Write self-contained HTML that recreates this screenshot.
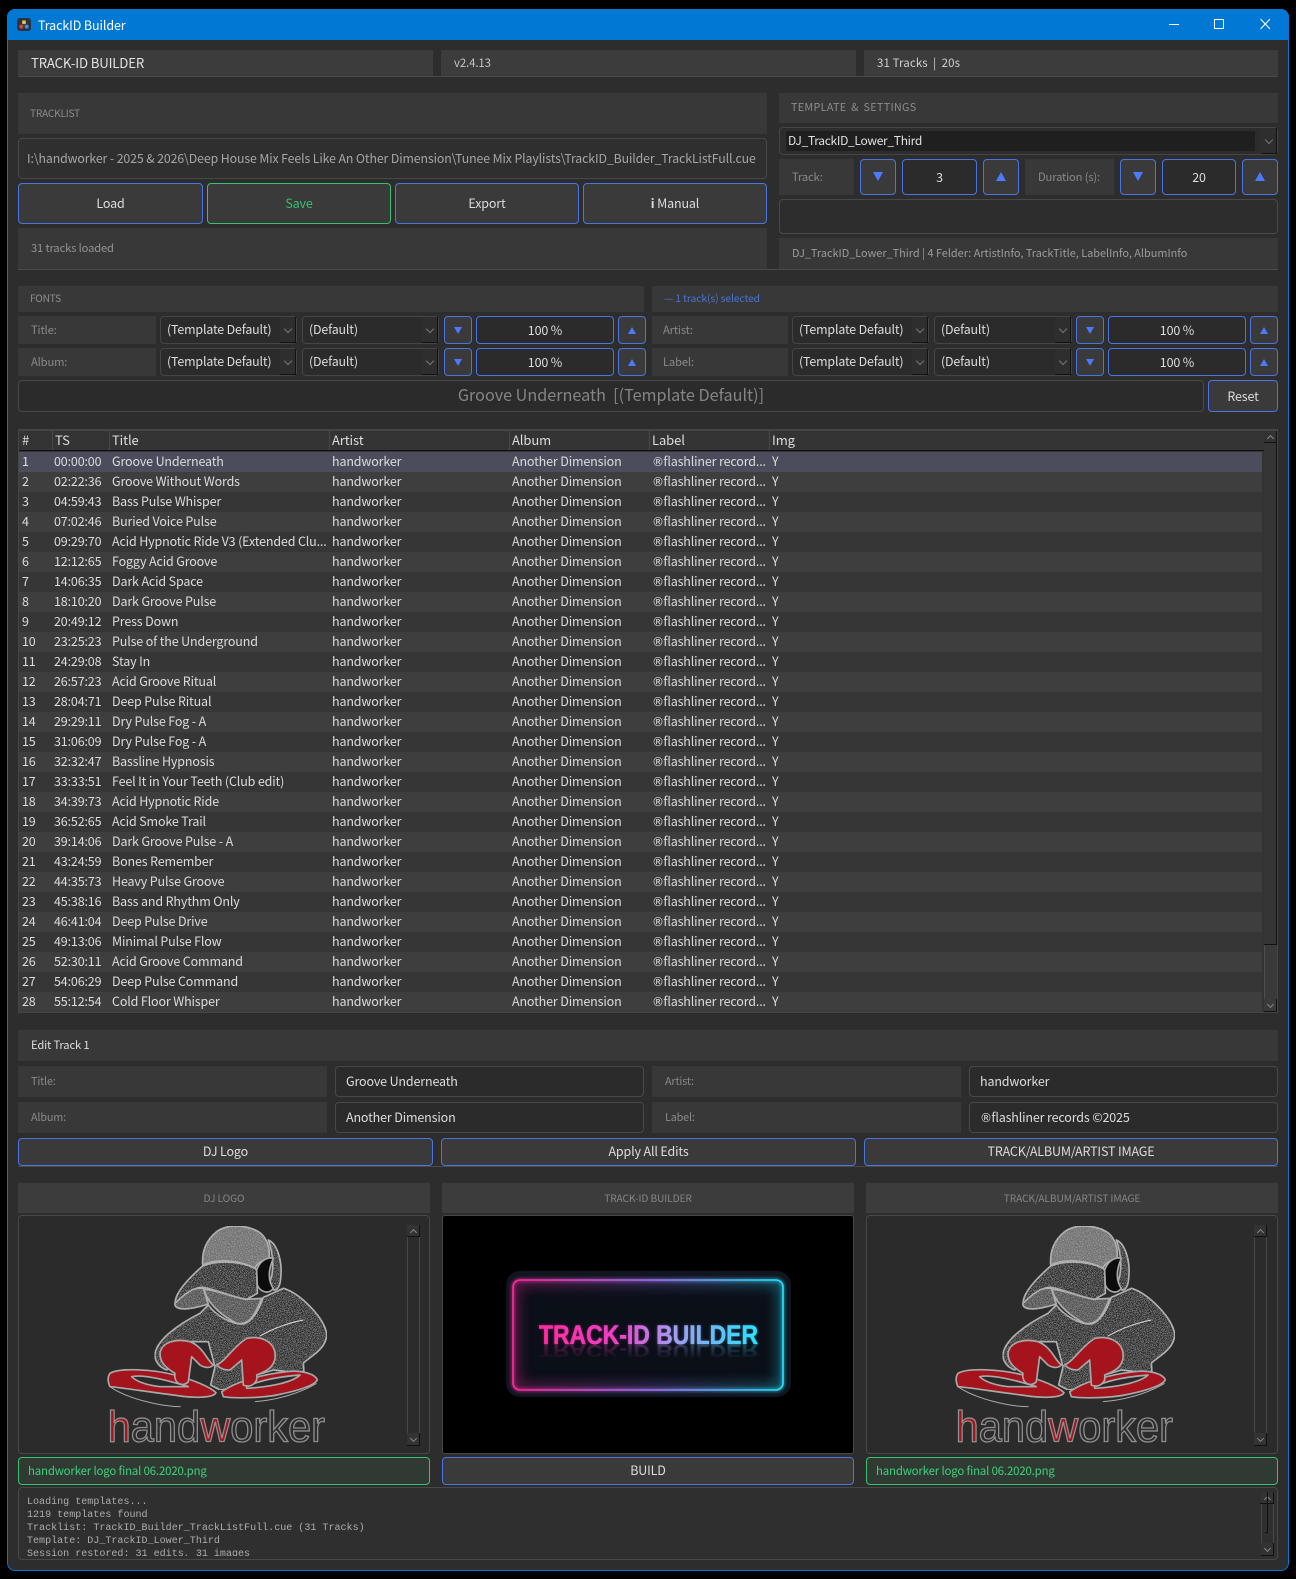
<!DOCTYPE html>
<html><head><meta charset="utf-8"><title>TrackID Builder</title>
<style>
html,body{margin:0;padding:0;background:#000;width:1296px;height:1579px;overflow:hidden}
body{position:relative;font-family:"Noto Sans CJK JP","Liberation Sans",sans-serif;font-size:12.5px;letter-spacing:-.15px;color:#ddd}
div,span{box-sizing:border-box}
s{text-decoration:none;font-family:"DejaVu Sans",sans-serif;font-size:12px;letter-spacing:-.6px}
.a{position:absolute}
.s{position:absolute;background:#383838}
.h{position:absolute;background:#3c3c3c}
.t{position:absolute;white-space:pre;line-height:16px;transform:translateY(-8px)}
.lb{color:#8a8a8a;font-size:11.2px;letter-spacing:-.15px}
.cap{color:#8c8c8c;font-size:10.2px;letter-spacing:-.25px}
.btn{position:absolute;background:#3a3a3a;border:1px solid #4a74e0;border-radius:4px;display:flex;align-items:center;justify-content:center;color:#ddd;font-size:12.5px;padding-bottom:2px}
.btn.n{padding-bottom:3px}
.val{position:absolute;background:#2b2b2b;border:1px solid #4a74e0;border-radius:4px;display:flex;align-items:center;justify-content:center;color:#ddd;font-size:12.5px;padding-bottom:2px}
.up,.dn{width:0;height:0;border-left:5px solid transparent;border-right:5px solid transparent}
.up{border-bottom:9px solid #4a7cff}.dn{border-top:9px solid #4a7cff}
.sm .up,.sm .dn{border-left-width:4px;border-right-width:4px}
.sm .up{border-bottom-width:7px}.sm .dn{border-top-width:7px}
.combo{position:absolute;background:#2b2b2b;border:1px solid #454545;border-radius:4px;color:#ddd;font-size:12.4px;line-height:24px;padding-left:6px;white-space:pre}
.combo:after{content:"";position:absolute;right:0;top:0;bottom:0;width:15px;background:#2e2e2e;border-right:1px solid #111;border-bottom:1px solid #111}
.combo:before{content:"";position:absolute;z-index:1;right:5px;top:9px;width:5px;height:5px;border-right:1px solid #777;border-bottom:1px solid #777;transform:rotate(45deg)}
.inp{position:absolute;background:#2b2b2b;border:1px solid #484848;border-radius:4px}
.r{position:absolute;left:19px;width:1243px;height:20px;background:#363636;font-size:12.5px;color:#dcdcdc}
.r:nth-child(even){background:#3e3e3e}
.r i{font-style:normal;position:absolute;top:-1px;line-height:19px;white-space:pre}
.r i:nth-child(1){left:3px}.r i:nth-child(2){left:35px}.r i:nth-child(3){left:93px}.r i:nth-child(4){left:313px}.r i:nth-child(5){left:493px}.r i:nth-child(6){left:633px}.r i:nth-child(7){left:753px}
.hc{position:absolute;top:431px;height:19px;border-left:1px solid #484848;line-height:18px;padding-left:2px;font-size:13px;letter-spacing:-.1px;color:#ddd}
.sb{position:absolute;background:#333;border-right:1px solid #111;border-bottom:1px solid #111}
.sb:after{content:"";position:absolute;left:4px;width:4px;height:4px;border-left:1px solid #888;border-top:1px solid #888}
.sb.u:after{top:5px;transform:rotate(45deg)}
.sb.d:after{top:3px;transform:rotate(225deg)}
.track{position:absolute;border-left:1px solid #484848;border-right:1px solid #484848}
.log{font-family:"Liberation Mono",monospace;font-size:10.05px;letter-spacing:0;color:#adadad}
.ih{text-align:center;line-height:29px;font-size:10.2px;letter-spacing:-.1px;color:#858585}
.fl{background:#2f3b32;border:1px solid #36c070;border-radius:4px;color:#3fd07f;font-size:11.4px;letter-spacing:-.15px;line-height:27px;padding-left:9px}
</style></head><body>
<svg width="0" height="0" style="position:absolute"><defs>
<filter id="gr" x="0" y="0" width="100%" height="100%"><feTurbulence type="fractalNoise" baseFrequency=".45" numOctaves="2" seed="3" result="n"/><feColorMatrix in="n" type="matrix" values="0 0 0 0 1 0 0 0 0 1 0 0 0 0 1 0 0 0 1 -.46" result="w"/><feComposite in="w" in2="SourceAlpha" operator="in" result="g"/><feMerge><feMergeNode in="SourceGraphic"/><feMergeNode in="g"/></feMerge></filter>
<symbol id="lg" viewBox="0 0 1140 750">
<g stroke="#a8a8a8" stroke-width="5" stroke-linejoin="round">
<g filter="url(#gr)">
<path fill="#2a2a2a" d="M285,432C290,392 350,345 420,310L445,285C470,320 520,345 550,342C580,335 600,290 610,262L670,235C720,250 790,320 800,370C802,420 740,445 730,460L732,490L640,480L590,495L560,530L480,540L452,525L465,470L445,395L390,395L320,480C295,470 283,450 285,432Z"/>
<path fill="#505050" d="M432,238C440,270 470,310 530,340C560,345 580,330 605,265L560,268C520,262 470,240 432,238Z"/>
<path fill="#505050" d="M345,285C350,302 390,300 445,282L430,235C395,232 345,250 345,285Z"/>
<path fill="#2c2c2c" d="M345,280C345,250 380,210 428,168C480,148 550,155 590,178L592,250L560,268C520,262 470,240 430,232C400,230 370,255 345,280Z"/>
<path fill="#6e6e6e" d="M428,165C425,120 440,90 470,65C500,42 560,42 600,68C620,85 630,110 628,145C610,150 590,160 585,175C540,150 470,145 428,165Z"/>
<path fill="#2e2e2e" d="M625,90C650,100 668,150 662,205C660,235 645,255 625,225C645,190 640,130 625,90Z"/>
</g>
<path fill="#0c0c0c" d="M590,180C600,150 625,140 640,145C625,180 622,210 640,235C625,255 600,245 592,225Z"/>
<path fill="none" stroke="#ddd" stroke-width="3" d="M600,378C640,355 680,340 730,330"/>
<path fill="#a5141c" d="M150,490C180,472 280,478 345,495C400,510 450,530 468,548C460,565 400,565 340,555C260,545 180,532 150,530C143,515 143,500 150,490Z"/>
<path fill="#2a2a2a" d="M215,500C250,492 320,510 385,530L300,530C260,525 230,515 215,500Z"/>
<path fill="#a5141c" d="M485,545C520,520 590,495 680,485C720,480 765,490 772,510C760,530 700,545 650,555C600,565 520,565 490,560Z"/>
<path fill="#2a2a2a" d="M560,530C600,510 660,500 720,495C700,515 640,530 560,535Z"/>
<path fill="#a5141c" d="M300,430C305,395 350,385 390,395C430,410 440,450 460,465C450,477 430,472 420,465L395,440L385,515C370,532 340,522 345,490C320,475 300,460 300,430Z"/>
<path fill="#a5141c" d="M470,465C500,450 520,410 560,385C610,375 650,400 645,445C640,480 600,490 590,495C595,520 570,535 550,525L545,450L510,480C490,480 480,475 470,465Z"/>
<path fill="none" stroke-width="3" d="M150,530C200,565 300,590 362,590"/>
<path fill="none" stroke-width="3" d="M585,575C650,570 720,550 770,520"/>
</g></symbol>
</defs></svg>

<!-- window -->
<div class="a" style="left:7px;top:9px;width:1282px;height:1562px;background:#2d2d2d;border:1px solid #0078d4;border-radius:8px"></div>
<div class="a" style="left:7px;top:9px;width:1282px;height:31px;background:#0078d4;border-radius:8px 8px 0 0"></div>
<svg class="a" style="left:17px;top:18px" width="14" height="13"><rect width="14" height="13" rx="3" fill="#2a3340"/><circle cx="7" cy="4.2" r="2" fill="#e8c24a"/><circle cx="4.3" cy="8.6" r="2" fill="#d8453c"/><circle cx="9.7" cy="8.6" r="2" fill="#3f8fe0"/></svg>
<div class="t" style="left:38px;top:25px;color:#fff;font-size:12.5px;letter-spacing:-.1px">TrackID Builder</div>
<svg class="a" style="left:1160px;top:14px" width="120" height="20" fill="none" stroke="#fff" stroke-width="1"><path d="M9,10.5H19"/><rect x="54.5" y="5.5" width="9" height="9"/><path d="M100.5,5L110,15M110,5L100.5,15"/></svg>

<!-- top header -->
<div class="h" style="left:18px;top:50px;width:415px;height:26px"></div>
<div class="h" style="left:441px;top:50px;width:415px;height:26px"></div>
<div class="h" style="left:864px;top:50px;width:414px;height:26px"></div>
<div class="a" style="left:18px;top:76px;width:1260px;height:1px;background:#4a4a4a"></div>
<div class="t" style="left:31px;top:63px;font-size:13.2px;color:#e2e2e2">TRACK-ID BUILDER</div>
<div class="t" style="left:454px;top:63px;font-size:11.4px;letter-spacing:-.1px;color:#c4c4c4">v2.4.13</div>
<div class="t" style="left:877px;top:63px;font-size:11.5px;letter-spacing:.1px;color:#d0d0d0">31 Tracks  |  20s</div>

<!-- tracklist -->
<div class="s" style="left:18px;top:93px;width:749px;height:41px"></div>
<div class="t cap" style="left:30px;top:113px">TRACKLIST</div>
<div class="inp" style="left:18px;top:138px;width:749px;height:41px;background:#2f2f2f"></div>
<div class="t" style="left:27px;top:158px;font-size:12.3px;color:#a6a6a6;width:732px;overflow:hidden;letter-spacing:-.1px">I:\handworker - 2025 &amp; 2026\Deep House Mix Feels Like An Other Dimension\Tunee Mix Playlists\TrackID_Builder_TrackListFull.cue</div>
<div class="btn" style="left:18px;top:183px;width:185px;height:41px">Load</div>
<div class="btn" style="left:207px;top:183px;width:184px;height:41px;border-color:#36c070;color:#36c070">Save</div>
<div class="btn" style="left:395px;top:183px;width:184px;height:41px">Export</div>
<div class="btn" style="left:583px;top:183px;width:184px;height:41px"><b>i</b>&nbsp;Manual</div>
<div class="s" style="left:18px;top:228px;width:749px;height:41px"></div>
<div class="t" style="left:31px;top:248px;font-size:11.2px;color:#929292">31 tracks loaded</div>

<!-- template -->
<div class="s" style="left:779px;top:93px;width:499px;height:30px"></div>
<div class="t cap" style="left:791px;top:107px;font-size:10.8px;letter-spacing:.3px;word-spacing:2px">TEMPLATE &amp; SETTINGS</div>
<div class="combo" style="left:779px;top:127px;width:499px;height:28px;padding:0;background:#2d2d2d"></div>
<div class="a" style="left:786px;top:131px;width:469px;height:20px;background:#1f1f1f"></div>
<div class="t" style="left:788px;top:141px;font-size:12px;letter-spacing:-.3px;color:#e0e0e0">DJ_TrackID_Lower_Third</div>
<div class="s" style="left:779px;top:159px;width:75px;height:36px"></div>
<div class="t lb" style="left:792px;top:177px">Track:</div>
<div class="btn" style="left:860px;top:159px;width:36px;height:36px"><span class="dn"></span></div>
<div class="val" style="left:902px;top:159px;width:75px;height:36px">3</div>
<div class="btn" style="left:983px;top:159px;width:36px;height:36px"><span class="up"></span></div>
<div class="s" style="left:1025px;top:159px;width:89px;height:36px"></div>
<div class="t lb" style="left:1038px;top:177px">Duration (s):</div>
<div class="btn" style="left:1120px;top:159px;width:36px;height:36px"><span class="dn"></span></div>
<div class="val" style="left:1162px;top:159px;width:74px;height:36px">20</div>
<div class="btn" style="left:1242px;top:159px;width:36px;height:36px"><span class="up"></span></div>
<div class="inp" style="left:779px;top:199px;width:499px;height:35px;background:#2d2d2d"></div>
<div class="s" style="left:779px;top:238px;width:499px;height:31px"></div>
<div class="t" style="left:792px;top:253px;font-size:10.9px;color:#9c9c9c;letter-spacing:0">DJ_TrackID_Lower_Third | 4 Felder: ArtistInfo, TrackTitle, LabelInfo, AlbumInfo</div>
<div class="a" style="left:18px;top:269px;width:1260px;height:1px;background:#4a4a4a"></div>

<!-- fonts -->
<div class="s" style="left:18px;top:286px;width:626px;height:26px"></div>
<div class="t cap" style="left:30px;top:298px">FONTS</div>
<div class="s" style="left:652px;top:286px;width:626px;height:26px"></div>
<div class="t" style="left:664px;top:298px;font-size:10.3px;color:#4a74d8;letter-spacing:-.1px">— 1 track(s) selected</div>

<div class="s" style="left:18px;top:316px;width:138px;height:28px"></div>
<div class="t lb" style="left:31px;top:330px">Title:</div>
<div class="combo" style="left:160px;top:316px;width:137px;height:28px">(Template Default)</div>
<div class="combo" style="left:302px;top:316px;width:137px;height:28px">(Default)</div>
<div class="btn sm" style="left:444px;top:316px;width:28px;height:28px;padding:0"><span class="dn"></span></div>
<div class="val" style="left:476px;top:316px;width:138px;height:28px">100 %</div>
<div class="btn sm" style="left:618px;top:316px;width:28px;height:28px;padding:0"><span class="up"></span></div>

<div class="s" style="left:18px;top:348px;width:138px;height:28px"></div>
<div class="t lb" style="left:31px;top:362px">Album:</div>
<div class="combo" style="left:160px;top:348px;width:137px;height:28px">(Template Default)</div>
<div class="combo" style="left:302px;top:348px;width:137px;height:28px">(Default)</div>
<div class="btn sm" style="left:444px;top:348px;width:28px;height:28px;padding:0"><span class="dn"></span></div>
<div class="val" style="left:476px;top:348px;width:138px;height:28px">100 %</div>
<div class="btn sm" style="left:618px;top:348px;width:28px;height:28px;padding:0"><span class="up"></span></div>

<div class="s" style="left:652px;top:316px;width:136px;height:28px"></div>
<div class="t lb" style="left:663px;top:330px">Artist:</div>
<div class="combo" style="left:792px;top:316px;width:137px;height:28px">(Template Default)</div>
<div class="combo" style="left:934px;top:316px;width:138px;height:28px">(Default)</div>
<div class="btn sm" style="left:1076px;top:316px;width:28px;height:28px;padding:0"><span class="dn"></span></div>
<div class="val" style="left:1108px;top:316px;width:138px;height:28px">100 %</div>
<div class="btn sm" style="left:1250px;top:316px;width:28px;height:28px;padding:0"><span class="up"></span></div>

<div class="s" style="left:652px;top:348px;width:136px;height:28px"></div>
<div class="t lb" style="left:663px;top:362px">Label:</div>
<div class="combo" style="left:792px;top:348px;width:137px;height:28px">(Template Default)</div>
<div class="combo" style="left:934px;top:348px;width:138px;height:28px">(Default)</div>
<div class="btn sm" style="left:1076px;top:348px;width:28px;height:28px;padding:0"><span class="dn"></span></div>
<div class="val" style="left:1108px;top:348px;width:138px;height:28px">100 %</div>
<div class="btn sm" style="left:1250px;top:348px;width:28px;height:28px;padding:0"><span class="up"></span></div>

<div class="inp" style="left:18px;top:380px;width:1186px;height:32px;background:#2b2b2b;display:flex;align-items:center;justify-content:center;white-space:pre;font-size:16.2px;color:#858585;letter-spacing:0;padding-bottom:4px">Groove Underneath  [(Template Default)]</div>
<div class="btn" style="left:1208px;top:380px;width:70px;height:32px">Reset</div>

<!-- table -->
<div class="a" style="left:18px;top:429px;width:1260px;height:584px;background:#333;border:1px solid #454545;border-top-width:2px;border-bottom-width:1px"></div>
<div class="a" style="left:19px;top:431px;width:1245px;height:19px;background:#343434"></div>
<div class="a" style="left:19px;top:450px;width:1245px;height:1px;background:#111"></div>
<div class="hc" style="left:19px;width:33px;border:0;padding-left:3px">#</div>
<div class="hc" style="left:52px;width:57px">TS</div>
<div class="hc" style="left:109px;width:220px">Title</div>
<div class="hc" style="left:329px;width:180px">Artist</div>
<div class="hc" style="left:509px;width:140px">Album</div>
<div class="hc" style="left:649px;width:120px">Label</div>
<div class="hc" style="left:769px;width:400px">Img</div>
<div class="a" id="rows" style="left:0;top:452px;width:1296px;height:560px">
<div class="r" style="top:0;background:#4c4c5c"><i>1</i><i>00:00:00</i><i>Groove Underneath</i><i>handworker</i><i>Another Dimension</i><i><s>®</s>flashliner record...</i><i>Y</i></div>
<div class="r" style="top:20px"><i>2</i><i>02:22:36</i><i>Groove Without Words</i><i>handworker</i><i>Another Dimension</i><i><s>®</s>flashliner record...</i><i>Y</i></div>
<div class="r" style="top:40px"><i>3</i><i>04:59:43</i><i>Bass Pulse Whisper</i><i>handworker</i><i>Another Dimension</i><i><s>®</s>flashliner record...</i><i>Y</i></div>
<div class="r" style="top:60px"><i>4</i><i>07:02:46</i><i>Buried Voice Pulse</i><i>handworker</i><i>Another Dimension</i><i><s>®</s>flashliner record...</i><i>Y</i></div>
<div class="r" style="top:80px"><i>5</i><i>09:29:70</i><i>Acid Hypnotic Ride V3 (Extended Clu...</i><i>handworker</i><i>Another Dimension</i><i><s>®</s>flashliner record...</i><i>Y</i></div>
<div class="r" style="top:100px"><i>6</i><i>12:12:65</i><i>Foggy Acid Groove</i><i>handworker</i><i>Another Dimension</i><i><s>®</s>flashliner record...</i><i>Y</i></div>
<div class="r" style="top:120px"><i>7</i><i>14:06:35</i><i>Dark Acid Space</i><i>handworker</i><i>Another Dimension</i><i><s>®</s>flashliner record...</i><i>Y</i></div>
<div class="r" style="top:140px"><i>8</i><i>18:10:20</i><i>Dark Groove Pulse</i><i>handworker</i><i>Another Dimension</i><i><s>®</s>flashliner record...</i><i>Y</i></div>
<div class="r" style="top:160px"><i>9</i><i>20:49:12</i><i>Press Down</i><i>handworker</i><i>Another Dimension</i><i><s>®</s>flashliner record...</i><i>Y</i></div>
<div class="r" style="top:180px"><i>10</i><i>23:25:23</i><i>Pulse of the Underground</i><i>handworker</i><i>Another Dimension</i><i><s>®</s>flashliner record...</i><i>Y</i></div>
<div class="r" style="top:200px"><i>11</i><i>24:29:08</i><i>Stay In</i><i>handworker</i><i>Another Dimension</i><i><s>®</s>flashliner record...</i><i>Y</i></div>
<div class="r" style="top:220px"><i>12</i><i>26:57:23</i><i>Acid Groove Ritual</i><i>handworker</i><i>Another Dimension</i><i><s>®</s>flashliner record...</i><i>Y</i></div>
<div class="r" style="top:240px"><i>13</i><i>28:04:71</i><i>Deep Pulse Ritual</i><i>handworker</i><i>Another Dimension</i><i><s>®</s>flashliner record...</i><i>Y</i></div>
<div class="r" style="top:260px"><i>14</i><i>29:29:11</i><i>Dry Pulse Fog - A</i><i>handworker</i><i>Another Dimension</i><i><s>®</s>flashliner record...</i><i>Y</i></div>
<div class="r" style="top:280px"><i>15</i><i>31:06:09</i><i>Dry Pulse Fog - A</i><i>handworker</i><i>Another Dimension</i><i><s>®</s>flashliner record...</i><i>Y</i></div>
<div class="r" style="top:300px"><i>16</i><i>32:32:47</i><i>Bassline Hypnosis</i><i>handworker</i><i>Another Dimension</i><i><s>®</s>flashliner record...</i><i>Y</i></div>
<div class="r" style="top:320px"><i>17</i><i>33:33:51</i><i>Feel It in Your Teeth (Club edit)</i><i>handworker</i><i>Another Dimension</i><i><s>®</s>flashliner record...</i><i>Y</i></div>
<div class="r" style="top:340px"><i>18</i><i>34:39:73</i><i>Acid Hypnotic Ride</i><i>handworker</i><i>Another Dimension</i><i><s>®</s>flashliner record...</i><i>Y</i></div>
<div class="r" style="top:360px"><i>19</i><i>36:52:65</i><i>Acid Smoke Trail</i><i>handworker</i><i>Another Dimension</i><i><s>®</s>flashliner record...</i><i>Y</i></div>
<div class="r" style="top:380px"><i>20</i><i>39:14:06</i><i>Dark Groove Pulse - A</i><i>handworker</i><i>Another Dimension</i><i><s>®</s>flashliner record...</i><i>Y</i></div>
<div class="r" style="top:400px"><i>21</i><i>43:24:59</i><i>Bones Remember</i><i>handworker</i><i>Another Dimension</i><i><s>®</s>flashliner record...</i><i>Y</i></div>
<div class="r" style="top:420px"><i>22</i><i>44:35:73</i><i>Heavy Pulse Groove</i><i>handworker</i><i>Another Dimension</i><i><s>®</s>flashliner record...</i><i>Y</i></div>
<div class="r" style="top:440px"><i>23</i><i>45:38:16</i><i>Bass and Rhythm Only</i><i>handworker</i><i>Another Dimension</i><i><s>®</s>flashliner record...</i><i>Y</i></div>
<div class="r" style="top:460px"><i>24</i><i>46:41:04</i><i>Deep Pulse Drive</i><i>handworker</i><i>Another Dimension</i><i><s>®</s>flashliner record...</i><i>Y</i></div>
<div class="r" style="top:480px"><i>25</i><i>49:13:06</i><i>Minimal Pulse Flow</i><i>handworker</i><i>Another Dimension</i><i><s>®</s>flashliner record...</i><i>Y</i></div>
<div class="r" style="top:500px"><i>26</i><i>52:30:11</i><i>Acid Groove Command</i><i>handworker</i><i>Another Dimension</i><i><s>®</s>flashliner record...</i><i>Y</i></div>
<div class="r" style="top:520px"><i>27</i><i>54:06:29</i><i>Deep Pulse Command</i><i>handworker</i><i>Another Dimension</i><i><s>®</s>flashliner record...</i><i>Y</i></div>
<div class="r" style="top:540px"><i>28</i><i>55:12:54</i><i>Cold Floor Whisper</i><i>handworker</i><i>Another Dimension</i><i><s>®</s>flashliner record...</i><i>Y</i></div>
</div>
<div class="a" style="left:1264px;top:431px;width:13px;height:581px;background:#3a3a3a"></div>
<div class="sb u" style="left:1264px;top:431px;width:13px;height:12px"></div>
<div class="a" style="left:1264px;top:443px;width:13px;height:502px;background:#353535;border-right:1px solid #111;border-bottom:1px solid #111"></div>
<div class="a" style="left:1264px;top:945px;width:1px;height:54px;background:#4e4e4e"></div>
<div class="sb d" style="left:1264px;top:999px;width:13px;height:13px;background:#3a3a3a"></div>

<!-- edit track -->
<div class="s" style="left:18px;top:1030px;width:1260px;height:31px"></div>
<div class="t" style="left:31px;top:1045px;font-size:11.2px;color:#dedede">Edit Track 1</div>
<div class="s" style="left:18px;top:1066px;width:309px;height:31px"></div>
<div class="t lb" style="left:31px;top:1081px;font-size:10.8px">Title:</div>
<div class="inp" style="left:335px;top:1066px;width:309px;height:31px"></div>
<div class="t" style="left:346px;top:1081px">Groove Underneath</div>
<div class="s" style="left:652px;top:1066px;width:309px;height:31px"></div>
<div class="t lb" style="left:665px;top:1081px;font-size:10.8px">Artist:</div>
<div class="inp" style="left:969px;top:1066px;width:309px;height:31px"></div>
<div class="t" style="left:980px;top:1081px">handworker</div>
<div class="s" style="left:18px;top:1102px;width:309px;height:31px"></div>
<div class="t lb" style="left:31px;top:1117px;font-size:10.8px">Album:</div>
<div class="inp" style="left:335px;top:1102px;width:309px;height:31px"></div>
<div class="t" style="left:346px;top:1117px">Another Dimension</div>
<div class="s" style="left:652px;top:1102px;width:309px;height:31px"></div>
<div class="t lb" style="left:665px;top:1117px;font-size:10.8px">Label:</div>
<div class="inp" style="left:969px;top:1102px;width:309px;height:31px"></div>
<div class="t" style="left:980px;top:1117px"><s>®</s>flashliner records ©2025</div>
<div class="a" style="left:18px;top:1166px;width:1260px;height:1px;background:#4a4a4a"></div>
<div class="btn n" style="left:18px;top:1138px;width:415px;height:28px">DJ Logo</div>
<div class="btn n" style="left:441px;top:1138px;width:415px;height:28px">Apply All Edits</div>
<div class="btn n" style="left:864px;top:1138px;width:414px;height:28px">TRACK/ALBUM/ARTIST IMAGE</div>

<!-- images -->
<div class="h ih" style="left:18px;top:1183px;width:412px;height:30px">DJ LOGO</div>
<div class="h ih" style="left:442px;top:1183px;width:412px;height:30px">TRACK-ID BUILDER</div>
<div class="h ih" style="left:866px;top:1183px;width:412px;height:30px">TRACK/ALBUM/ARTIST IMAGE</div>

<div class="inp" style="left:18px;top:1215px;width:412px;height:239px"></div>
<svg class="a" style="left:60px;top:1210px" width="380" height="250" viewBox="0 0 1140 750"><use href="#lg"/>
<text x="143" y="695" font-family="Liberation Sans" font-size="130" textLength="652" lengthAdjust="spacingAndGlyphs" stroke="#8f8f8f" stroke-width="4" fill="#2c2c2c" letter-spacing="0"><tspan fill="#a5141c">h</tspan>and<tspan fill="#a5141c">w</tspan>orker</text></svg>
<div class="track" style="left:407px;top:1237px;width:13px;height:196px"></div>
<div class="sb u" style="left:407px;top:1225px;width:13px;height:12px"></div>
<div class="sb d" style="left:407px;top:1433px;width:13px;height:13px"></div>

<div class="a" style="left:442px;top:1215px;width:412px;height:239px;background:#000;border:1px solid #484848;border-radius:3px"></div>
<svg class="a" style="left:440px;top:1210px" width="420" height="250" viewBox="0 0 420 250">
<defs><filter id="bl" x="-30%" y="-30%" width="160%" height="160%"><feGaussianBlur stdDeviation="7"/></filter><filter id="bl2" x="-10%" y="-30%" width="120%" height="160%"><feGaussianBlur stdDeviation="1.5"/></filter><filter id="bl3" x="-5%" y="-30%" width="110%" height="160%"><feGaussianBlur stdDeviation=".7"/></filter>
<linearGradient id="ng2" gradientUnits="userSpaceOnUse" x1="73" x2="343" y1="0" y2="0"><stop offset="0" stop-color="#ff2a9c"/><stop offset=".5" stop-color="#a070f0"/><stop offset="1" stop-color="#25e4ff"/></linearGradient>
<linearGradient id="tg" gradientUnits="userSpaceOnUse" x1="99" x2="318" y1="0" y2="0"><stop offset="0" stop-color="#ff2a9c"/><stop offset=".35" stop-color="#f040c8"/><stop offset=".6" stop-color="#a898f0"/><stop offset="1" stop-color="#25e4ff"/></linearGradient>
<linearGradient id="fd" x1="0" x2="0" y1="0" y2="1"><stop offset="0" stop-color="#fff" stop-opacity=".32"/><stop offset="1" stop-color="#fff" stop-opacity="0"/></linearGradient>
<mask id="rm" maskUnits="userSpaceOnUse" x="90" y="135" width="240" height="15"><rect x="90" y="135" width="240" height="15" fill="url(#fd)"/></mask>
<clipPath id="oc"><rect x="73" y="70" width="270" height="110" rx="7"/></clipPath></defs>
<rect x="66" y="61" width="285" height="126" rx="14" fill="#10151f"/>
<rect x="73" y="70" width="270" height="110" rx="7" fill="#0b0f18"/>
<g clip-path="url(#oc)"><rect x="73" y="70" width="270" height="110" rx="7" fill="none" stroke="url(#ng2)" stroke-width="8" filter="url(#bl)" opacity=".5"/></g>
<rect x="73" y="70" width="270" height="110" rx="7" fill="none" stroke="url(#ng2)" stroke-width="4" filter="url(#bl2)" opacity=".5"/>
<rect x="73" y="70" width="270" height="110" rx="7" fill="none" stroke="url(#ng2)" stroke-width="1.6"/>
<text x="99" y="134" font-family="Liberation Sans" font-weight="bold" font-size="27" letter-spacing="0" textLength="219" lengthAdjust="spacingAndGlyphs" fill="url(#tg)" filter="url(#bl2)" opacity=".5">TRACK-ID BUILDER</text>
<text x="99" y="134" font-family="Liberation Sans" font-weight="bold" font-size="27" letter-spacing="0" textLength="219" lengthAdjust="spacingAndGlyphs" fill="url(#tg)" stroke="url(#tg)" stroke-width=".5">TRACK-ID BUILDER</text>
<g mask="url(#rm)"><text transform="translate(0,135) scale(1,-.65)" x="99" font-family="Liberation Sans" font-weight="bold" font-size="27" letter-spacing="0" textLength="219" lengthAdjust="spacingAndGlyphs" fill="url(#tg)" filter="url(#bl3)">TRACK-ID BUILDER</text></g>
</svg>

<div class="inp" style="left:866px;top:1215px;width:412px;height:239px"></div>
<svg class="a" style="left:908px;top:1210px" width="380" height="250" viewBox="0 0 1140 750"><use href="#lg"/>
<text x="143" y="695" font-family="Liberation Sans" font-size="130" textLength="652" lengthAdjust="spacingAndGlyphs" stroke="#8f8f8f" stroke-width="4" fill="#2c2c2c" letter-spacing="0"><tspan fill="#a5141c">h</tspan>and<tspan fill="#a5141c">w</tspan>orker</text></svg>
<div class="track" style="left:1254px;top:1237px;width:13px;height:196px"></div>
<div class="sb u" style="left:1254px;top:1225px;width:13px;height:12px"></div>
<div class="sb d" style="left:1254px;top:1433px;width:13px;height:13px"></div>

<div class="a fl" style="left:18px;top:1457px;width:412px;height:28px">handworker logo final 06.2020.png</div>
<div class="btn n" style="left:442px;top:1457px;width:412px;height:28px">BUILD</div>
<div class="a fl" style="left:866px;top:1457px;width:412px;height:28px">handworker logo final 06.2020.png</div>

<!-- log -->
<div class="inp" style="left:18px;top:1487px;width:1260px;height:73px;background:#2f2f2f"></div>
<div class="a log" style="left:27px;top:1496px;width:800px;height:60px;overflow:hidden;line-height:13px;white-space:pre">Loading templates...
1219 templates found
Tracklist: TrackID_Builder_TrackListFull.cue (31 Tracks)
Template: DJ_TrackID_Lower_Third
Session restored: 31 edits, 31 images</div>
<div class="track" style="left:1261px;top:1504px;width:13px;height:39px"></div>
<div class="sb u" style="left:1261px;top:1492px;width:13px;height:12px"></div>
<div class="a" style="left:1267px;top:1492px;width:1px;height:40px;background:#111"></div>
<div class="a" style="left:1260px;top:1503px;width:13px;height:1px;background:#111"></div>
<div class="a" style="left:1265px;top:1532px;width:3px;height:1px;background:#111"></div>
<div class="sb d" style="left:1261px;top:1543px;width:13px;height:13px"></div>
</body></html>
